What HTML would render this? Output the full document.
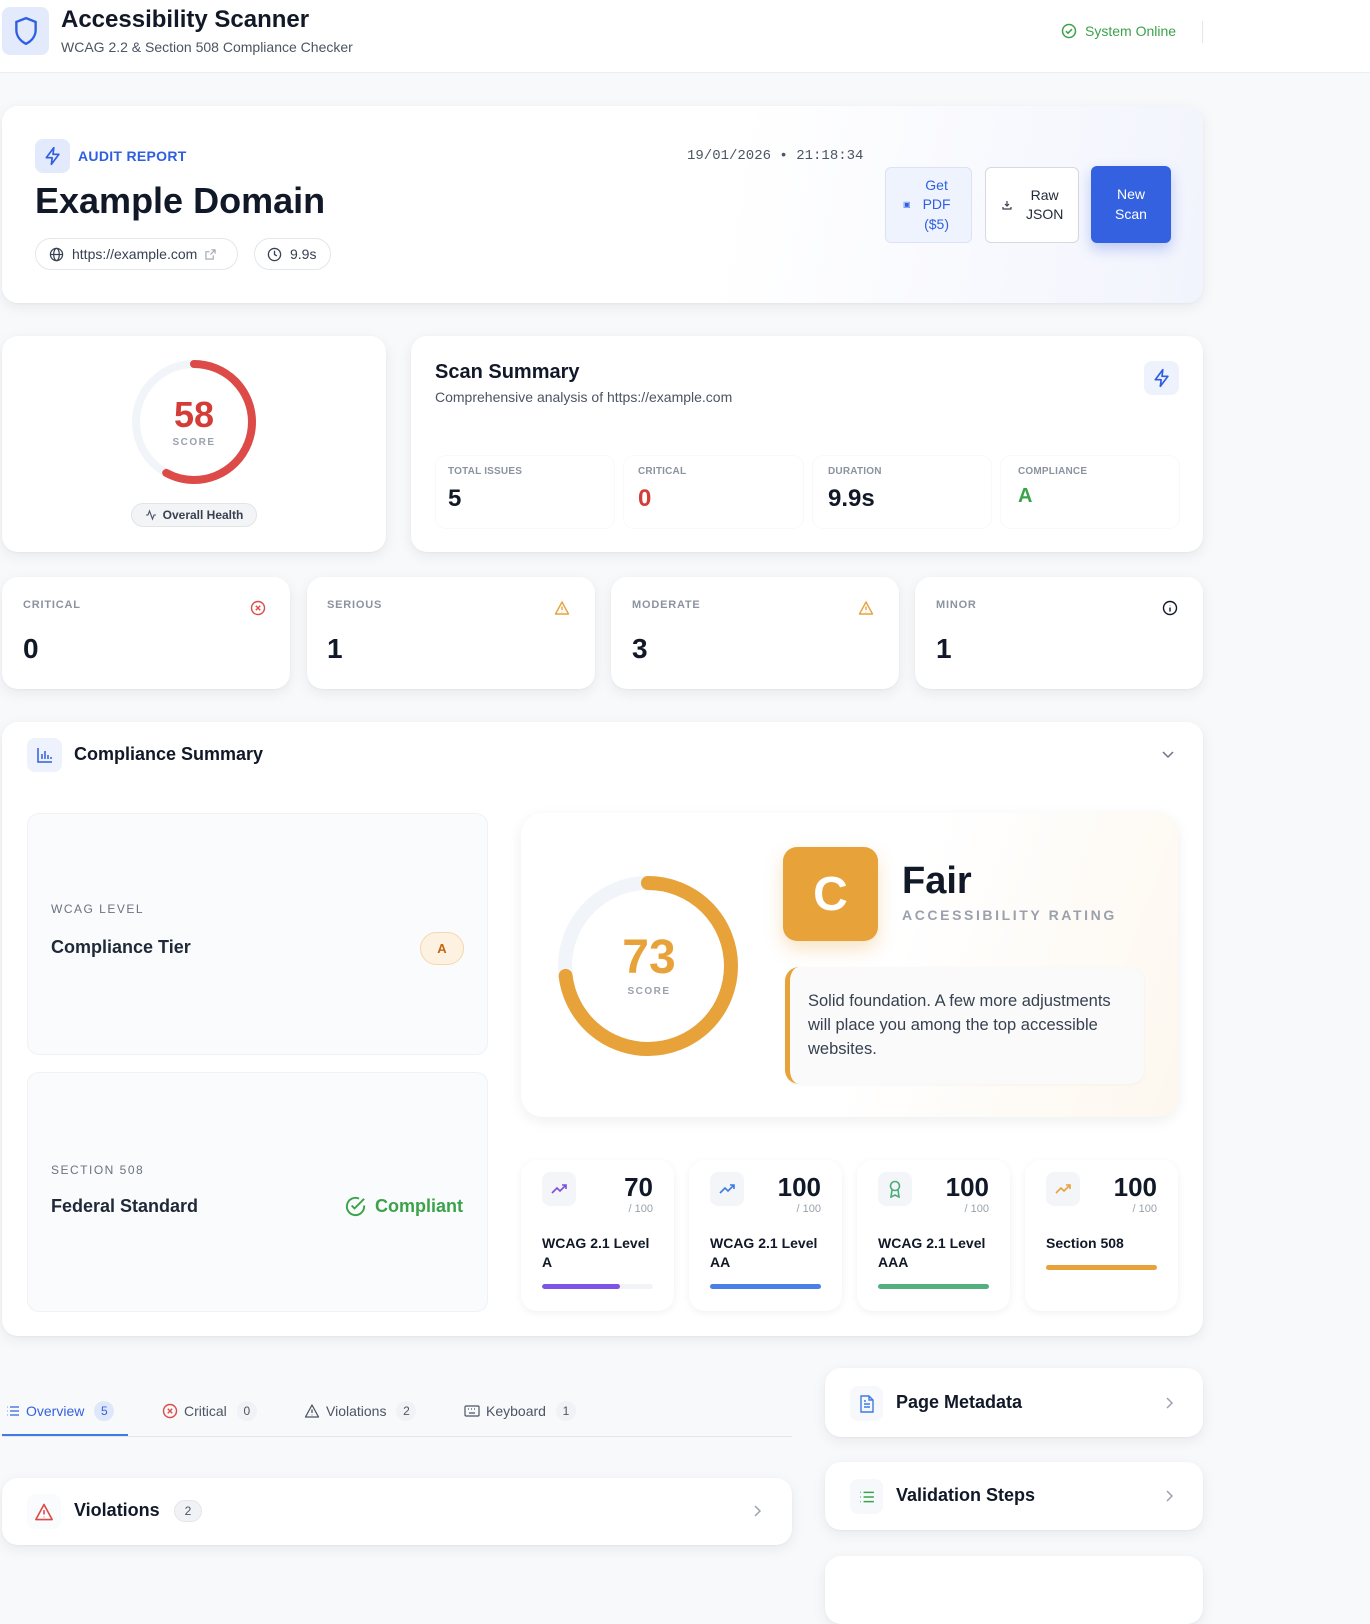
<!DOCTYPE html>
<html><head><meta charset="utf-8"><style>
*{box-sizing:border-box;margin:0;padding:0}
body{width:1370px;height:1586px;overflow:hidden;background:#f8f9fb;font-family:"Liberation Sans",sans-serif;color:#111827;position:relative}
.a{position:absolute}
.card{position:absolute;background:#fff;border-radius:16px;box-shadow:0 4px 14px rgba(15,23,42,.07),0 1px 2px rgba(15,23,42,.04)}
.lbl{font-size:11px;font-weight:700;color:#8b93a1;letter-spacing:.8px}
.big{font-size:28px;font-weight:700}
.ib{position:absolute;border-radius:8px;background:#f3f5f9;display:flex;align-items:center;justify-content:center}
.mini{position:absolute;top:1160px;width:153px;height:151px;background:#fff;border-radius:16px;box-shadow:0 2px 8px rgba(15,23,42,.06)}
.mini .n{position:absolute;right:21px;top:12px;font-size:26px;font-weight:700}
.mini .d{position:absolute;right:21px;top:43px;font-size:11px;color:#9aa1ad}
.mini .t{position:absolute;left:21px;top:74px;font-size:14px;font-weight:700;line-height:19px;width:115px}
.mini .bar{position:absolute;left:21px;width:111px;height:5px;border-radius:3px;background:#f1f3f6;overflow:hidden}
.tab{position:absolute;top:1401px;font-size:14px;color:#4b5563;display:flex;align-items:center;gap:6px}
.cnt{display:inline-block;min-width:20px;height:20px;border-radius:10px;background:#f0f2f5;font-size:12px;text-align:center;line-height:20px;margin-left:4px;color:#4b5563}
</style></head><body>
<!-- header -->
<div class="a" style="left:0;top:0;width:1370px;height:73px;background:#fff;border-bottom:1px solid #eceef2"></div>
<div class="a" style="left:2px;top:7px;width:47px;height:48px;background:#e2eafb;border-radius:8px;display:flex;align-items:center;justify-content:center">
<svg width="26" height="30" viewBox="0 0 24 28" fill="none" stroke="#2f5fe0" stroke-width="2.2"><path d="M12 2 L21 5.5 V13 C21 19 17 23.5 12 26 C7 23.5 3 19 3 13 V5.5 Z"/></svg></div>
<div class="a" style="left:61px;top:6px;font-size:24px;font-weight:700">Accessibility Scanner</div>
<div class="a" style="left:61px;top:39px;font-size:14px;color:#4b5563">WCAG 2.2 &amp; Section 508 Compliance Checker</div>
<div class="a" style="left:1061px;top:23px;font-size:14px;color:#3ca24a;display:flex;align-items:center;gap:8px"><svg width="16" height="16" viewBox="0 0 16 16" fill="none" stroke="#3ca24a" stroke-width="1.5"><circle cx="8" cy="8" r="6.5"/><path d="M5 8.2l2 2 4-4"/></svg>System Online</div>
<div class="a" style="left:1202px;top:21px;width:1px;height:22px;background:#e5e7eb"></div>

<!-- audit card -->
<div class="card" style="left:2px;top:106px;width:1201px;height:197px;background:linear-gradient(100deg,#fff 60%,#f2f4fd 100%)"></div>
<div class="a" style="left:35px;top:139px;width:35px;height:34px;border-radius:8px;background:#e2eafb;display:flex;align-items:center;justify-content:center"><svg width="20" height="20" viewBox="0 0 24 24" fill="none" stroke="#2f5fe0" stroke-width="2" stroke-linejoin="round"><path d="M13 2L4 14h7l-1 8 9-12h-7z"/></svg></div>
<div class="a" style="left:78px;top:148px;font-size:14px;font-weight:700;color:#2f5fe0;letter-spacing:.3px">AUDIT REPORT</div>
<div class="a" style="left:687px;top:148px;font-size:14px;color:#4b5563;font-family:'Liberation Mono',monospace">19/01/2026 • 21:18:34</div>
<div class="a" style="left:35px;top:180px;font-size:36px;font-weight:700">Example Domain</div>
<div class="a" style="left:35px;top:238px;width:203px;height:32px;border:1px solid #e3e6eb;border-radius:16px;background:#fff;font-size:14px;color:#374151;display:flex;align-items:center;padding-left:13px;gap:8px"><svg width="15" height="15" viewBox="0 0 16 16" fill="none" stroke="#374151" stroke-width="1.3"><circle cx="8" cy="8" r="6.5"/><ellipse cx="8" cy="8" rx="3" ry="6.5"/><path d="M1.5 8h13"/></svg>https://example.com<svg width="11" height="11" viewBox="0 0 12 12" fill="none" stroke="#9ca3af" stroke-width="1.2"><path d="M7 1h4v4M11 1L6 6M9 7v4H1V3h4"/></svg></div>
<div class="a" style="left:254px;top:238px;width:77px;height:32px;border:1px solid #e3e6eb;border-radius:16px;background:#fff;font-size:14px;color:#374151;display:flex;align-items:center;padding-left:12px;gap:8px"><svg width="15" height="15" viewBox="0 0 16 16" fill="none" stroke="#374151" stroke-width="1.4"><circle cx="8" cy="8" r="6.5"/><path d="M8 4v4l2.5 1.5"/></svg>9.9s</div>
<div class="a" style="left:885px;top:167px;width:87px;height:76px;border:1px solid #dbe3f3;border-radius:6px;background:#eef3fd;color:#2f5fe0;font-size:14px;line-height:19.5px;display:flex;align-items:center;padding-left:17px;gap:12px"><span style="font-size:8px">▣</span><span style="text-align:center">Get<br>PDF<br>($5)</span></div>
<div class="a" style="left:985px;top:167px;width:94px;height:76px;border:1px solid #d5d9e0;border-radius:6px;background:#fff;color:#1f2937;font-size:14px;line-height:19.5px;display:flex;align-items:center;padding-left:16px;gap:14px"><svg width="10" height="10" viewBox="0 0 10 10" fill="none" stroke="#374151" stroke-width="1.2"><path d="M5 1v5M3 4l2 2 2-2M1 7v2h8V7"/></svg><span style="text-align:center">Raw<br>JSON</span></div>
<div class="a" style="left:1091px;top:166px;width:80px;height:77px;border-radius:6px;background:#3461df;color:#fff;font-size:14px;line-height:19.5px;display:flex;align-items:center;justify-content:center;text-align:center;box-shadow:0 6px 14px rgba(52,97,223,.3)">New<br>Scan</div>

<!-- score card -->
<div class="card" style="left:2px;top:336px;width:384px;height:216px"></div>
<svg class="a" style="left:130px;top:358px" width="128" height="128" viewBox="0 0 128 128"><circle cx="64" cy="64" r="58" fill="none" stroke="#f1f4f9" stroke-width="8"/><circle cx="64" cy="64" r="58" fill="none" stroke="#dc4b47" stroke-width="8" stroke-linecap="round" stroke-dasharray="211 400" transform="rotate(-90 64 64)"/></svg>
<div class="a" style="left:144px;top:394px;width:100px;text-align:center;font-size:36px;font-weight:700;color:#d33c37">58</div>
<div class="a" style="left:144px;top:437px;width:100px;text-align:center;font-size:10px;font-weight:700;color:#9aa1ad;letter-spacing:1.5px">SCORE</div>
<div class="a" style="left:131px;top:503px;width:126px;height:24px;border:1px solid #e1e4e9;border-radius:12px;background:#f3f4f6;font-size:12px;font-weight:700;color:#374151;display:flex;align-items:center;justify-content:center;gap:6px"><svg width="12" height="12" viewBox="0 0 12 12" fill="none" stroke="#4b5563" stroke-width="1.1"><path d="M1 6h2l1.5-4 3 8L9 6h2"/></svg>Overall Health</div>

<!-- scan summary -->
<div class="card" style="left:411px;top:336px;width:792px;height:216px"></div>
<div class="a" style="left:435px;top:361px;font-size:20px;font-weight:700">Scan Summary</div>
<div class="a" style="left:435px;top:389px;font-size:14px;color:#4b5563">Comprehensive analysis of https://example.com</div>
<div class="a" style="left:1144px;top:361px;width:35px;height:34px;border-radius:8px;background:#eef2fc;display:flex;align-items:center;justify-content:center"><svg width="20" height="20" viewBox="0 0 24 24" fill="none" stroke="#2f5fe0" stroke-width="2" stroke-linejoin="round"><path d="M13 2L4 14h7l-1 8 9-12h-7z"/></svg></div>
<div class="a" style="left:436px;top:456px;width:743px;height:72px;display:flex;gap:10px">
<div style="flex:1;border-radius:10px;box-shadow:0 0 0 1px #f8f9fa"></div><div style="flex:1;border-radius:10px;box-shadow:0 0 0 1px #f8f9fa"></div><div style="flex:1;border-radius:10px;box-shadow:0 0 0 1px #f8f9fa"></div><div style="flex:1;border-radius:10px;box-shadow:0 0 0 1px #f8f9fa"></div></div>
<div class="a lbl" style="left:448px;top:466px;font-size:10px;letter-spacing:.2px">TOTAL ISSUES</div>
<div class="a lbl" style="left:638px;top:466px;font-size:10px;letter-spacing:.2px">CRITICAL</div>
<div class="a lbl" style="left:828px;top:466px;font-size:10px;letter-spacing:.2px">DURATION</div>
<div class="a lbl" style="left:1018px;top:466px;font-size:10px;letter-spacing:.2px">COMPLIANCE</div>
<div class="a" style="left:448px;top:485px;font-size:24px;font-weight:700">5</div>
<div class="a" style="left:638px;top:485px;font-size:24px;font-weight:700;color:#d33c37">0</div>
<div class="a" style="left:828px;top:485px;font-size:24px;font-weight:700">9.9s</div>
<div class="a" style="left:1018px;top:485px;font-size:20px;font-weight:700;color:#3ca24a">A</div>

<!-- severity -->
<div class="card" style="left:2px;top:577px;width:288px;height:112px"></div>
<div class="card" style="left:307px;top:577px;width:288px;height:112px"></div>
<div class="card" style="left:611px;top:577px;width:288px;height:112px"></div>
<div class="card" style="left:915px;top:577px;width:288px;height:112px"></div>
<div class="a lbl" style="left:23px;top:599px">CRITICAL</div>
<div class="a lbl" style="left:327px;top:599px">SERIOUS</div>
<div class="a lbl" style="left:632px;top:599px">MODERATE</div>
<div class="a lbl" style="left:936px;top:599px">MINOR</div>
<div class="a big" style="left:23px;top:633px">0</div>
<div class="a big" style="left:327px;top:633px">1</div>
<div class="a big" style="left:632px;top:633px">3</div>
<div class="a big" style="left:936px;top:633px">1</div>
<svg class="a" style="left:250px;top:600px" width="16" height="16" viewBox="0 0 16 16" fill="none" stroke="#dc4b47" stroke-width="1.4"><circle cx="8" cy="8" r="6.5"/><path d="M5.8 5.8l4.4 4.4M10.2 5.8l-4.4 4.4"/></svg>
<svg class="a" style="left:554px;top:600px" width="16" height="16" viewBox="0 0 16 16" fill="none" stroke="#e8a23a" stroke-width="1.4" stroke-linejoin="round"><path d="M8 2L1.5 14h13z"/><path d="M8 6.5v3.5M8 11.8v.4"/></svg>
<svg class="a" style="left:858px;top:600px" width="16" height="16" viewBox="0 0 16 16" fill="none" stroke="#e8a23a" stroke-width="1.4" stroke-linejoin="round"><path d="M8 2L1.5 14h13z"/><path d="M8 6.5v3.5M8 11.8v.4"/></svg>
<svg class="a" style="left:1162px;top:600px" width="16" height="16" viewBox="0 0 16 16" fill="none" stroke="#111827" stroke-width="1.4"><circle cx="8" cy="8" r="6.5"/><path d="M8 7.5v4M8 5v.3"/></svg>

<!-- compliance summary -->
<div class="card" style="left:2px;top:722px;width:1201px;height:614px"></div>
<div class="a" style="left:27px;top:738px;width:35px;height:34px;border-radius:8px;background:#eef2fc;display:flex;align-items:center;justify-content:center"><svg width="18" height="18" viewBox="0 0 18 18" fill="none" stroke="#2f5fe0" stroke-width="1.5"><path d="M2 2v14h14M6 13V8M9 13V5M12 13V9M15 13v-2"/></svg></div>
<div class="a" style="left:74px;top:744px;font-size:18px;font-weight:700">Compliance Summary</div>
<svg class="a" style="left:1161px;top:749px" width="14" height="12" viewBox="0 0 14 12" fill="none" stroke="#6b7280" stroke-width="1.5"><path d="M2 3l5 5 5-5"/></svg>

<div class="a" style="left:27px;top:813px;width:461px;height:242px;background:#fafbfd;border:1px solid #f0f1f4;border-radius:12px"></div>
<div class="a" style="left:27px;top:1072px;width:461px;height:240px;background:#fafbfd;border:1px solid #f0f1f4;border-radius:12px"></div>
<div class="a lbl" style="left:51px;top:902px;font-size:12px;letter-spacing:1.5px;font-weight:400;color:#6b7280">WCAG LEVEL</div>
<div class="a" style="left:51px;top:937px;font-size:18px;font-weight:700;color:#1f2937">Compliance Tier</div>
<div class="a" style="left:420px;top:932px;width:44px;height:33px;border-radius:17px;background:#fdf1e2;border:1px solid #f6d7aa;color:#c2660e;font-size:13px;font-weight:700;display:flex;align-items:center;justify-content:center">A</div>
<div class="a lbl" style="left:51px;top:1163px;font-size:12px;letter-spacing:1.5px;font-weight:400;color:#6b7280">SECTION 508</div>
<div class="a" style="left:51px;top:1196px;font-size:18px;font-weight:700;color:#1f2937">Federal Standard</div>
<div class="a" style="left:344px;top:1195px;font-size:18px;font-weight:700;color:#3ca24a;display:flex;align-items:center;gap:8px"><svg width="23" height="23" viewBox="0 0 24 24" fill="none" stroke="#3ca24a" stroke-width="2"><path d="M21 11v1a9 9 0 1 1-5.3-8.2"/><path d="M8 11l3 3 10-10"/></svg>Compliant</div>

<div class="a" style="left:521px;top:813px;width:657px;height:304px;border-radius:22px;background:linear-gradient(110deg,#fff 55%,#fdf7ee 100%);box-shadow:0 4px 14px rgba(15,23,42,.07)"></div>
<svg class="a" style="left:557px;top:875px" width="182" height="182" viewBox="0 0 182 182"><circle cx="91" cy="91" r="83" fill="none" stroke="#f1f4f9" stroke-width="14"/><circle cx="91" cy="91" r="83" fill="none" stroke="#e8a23a" stroke-width="14" stroke-linecap="round" stroke-dasharray="381 600" transform="rotate(-90 91 91)"/></svg>
<div class="a" style="left:589px;top:930px;width:120px;text-align:center;font-size:48px;font-weight:700;color:#e8a23a">73</div>
<div class="a" style="left:589px;top:986px;width:120px;text-align:center;font-size:10px;font-weight:700;color:#9aa1ad;letter-spacing:1.5px">SCORE</div>
<div class="a" style="left:783px;top:847px;width:95px;height:94px;border-radius:14px;background:#e8a23a;color:#fff;font-size:48px;font-weight:700;display:flex;align-items:center;justify-content:center;box-shadow:0 8px 18px rgba(232,162,58,.3)">C</div>
<div class="a" style="left:902px;top:860px;font-size:38px;font-weight:700">Fair</div>
<div class="a" style="left:902px;top:907px;font-size:14px;font-weight:700;color:#9aa1ad;letter-spacing:2.6px">ACCESSIBILITY RATING</div>
<div class="a" style="left:785px;top:967px;width:359px;height:117px;border-radius:14px;background:#fafafa;border-left:5px solid #e8a23a;box-shadow:0 1px 3px rgba(0,0,0,.04);padding:22px 30px 0 18px;font-size:16.5px;line-height:24px;color:#374151">Solid foundation. A few more adjustments will place you among the top accessible websites.</div>

<div class="mini" style="left:521px"><div class="ib" style="left:21px;top:12px;width:34px;height:34px"><svg width="18" height="18" viewBox="0 0 18 18" fill="none" stroke="#7c4ddf" stroke-width="1.6"><path d="M2 13l5-5 3 3 6-6M12 5h4v4"/></svg></div><div class="n">70</div><div class="d">/ 100</div><div class="t">WCAG 2.1 Level A</div><div class="bar" style="top:124px"><div style="width:70%;height:100%;background:#7c55e6;border-radius:3px"></div></div></div>
<div class="mini" style="left:689px"><div class="ib" style="left:21px;top:12px;width:34px;height:34px"><svg width="18" height="18" viewBox="0 0 18 18" fill="none" stroke="#3e7be6" stroke-width="1.6"><path d="M2 13l5-5 3 3 6-6M12 5h4v4"/></svg></div><div class="n">100</div><div class="d">/ 100</div><div class="t">WCAG 2.1 Level AA</div><div class="bar" style="top:124px;background:#4b7fe8"></div></div>
<div class="mini" style="left:857px"><div class="ib" style="left:21px;top:12px;width:34px;height:34px"><svg width="16" height="18" viewBox="0 0 16 18" fill="none" stroke="#49ad78" stroke-width="1.6"><circle cx="8" cy="6" r="4.5"/><path d="M5 10l-1 7 4-2 4 2-1-7"/></svg></div><div class="n">100</div><div class="d">/ 100</div><div class="t">WCAG 2.1 Level AAA</div><div class="bar" style="top:124px;background:#52b07f"></div></div>
<div class="mini" style="left:1025px"><div class="ib" style="left:21px;top:12px;width:34px;height:34px"><svg width="18" height="18" viewBox="0 0 18 18" fill="none" stroke="#e8a23a" stroke-width="1.6"><path d="M2 13l5-5 3 3 6-6M12 5h4v4"/></svg></div><div class="n">100</div><div class="d">/ 100</div><div class="t">Section 508</div><div class="bar" style="top:105px;background:#e8a23a"></div></div>

<!-- tabs -->
<div class="a" style="left:2px;top:1436px;width:790px;height:1px;background:#e5e7eb"></div>
<div class="a" style="left:2px;top:1434px;width:126px;height:2px;background:#3e7be6"></div>
<div class="tab" style="left:6px;color:#3461df"><svg width="14" height="12" viewBox="0 0 14 12" fill="none" stroke="#3461df" stroke-width="1.3"><path d="M4 2h9M4 6h9M4 10h9M1 2h.5M1 6h.5M1 10h.5"/></svg>Overview<span class="cnt" style="background:#dfe8fb;color:#3461df">5</span></div>
<div class="tab" style="left:162px"><svg width="16" height="16" viewBox="0 0 16 16" fill="none" stroke="#dc4b47" stroke-width="1.4"><circle cx="8" cy="8" r="6.5"/><path d="M5.8 5.8l4.4 4.4M10.2 5.8l-4.4 4.4"/></svg>Critical<span class="cnt">0</span></div>
<div class="tab" style="left:304px"><svg width="16" height="16" viewBox="0 0 16 16" fill="none" stroke="#4b5563" stroke-width="1.3" stroke-linejoin="round"><path d="M8 2L1.5 14h13z"/><path d="M8 6.5v3.5M8 11.8v.4"/></svg>Violations<span class="cnt">2</span></div>
<div class="tab" style="left:464px"><svg width="16" height="14" viewBox="0 0 16 14" fill="none" stroke="#4b5563" stroke-width="1.2"><rect x="1" y="2" width="14" height="10" rx="1"/><path d="M4 5h1M7 5h1M10 5h1M5 9h6"/></svg>Keyboard<span class="cnt">1</span></div>

<div class="card" style="left:2px;top:1478px;width:790px;height:67px"></div>
<div class="a" style="left:27px;top:1494px;width:34px;height:35px;border-radius:8px;background:#fafbfc;display:flex;align-items:center;justify-content:center"><svg width="20" height="20" viewBox="0 0 16 16" fill="none" stroke="#dc4b47" stroke-width="1.3" stroke-linejoin="round"><path d="M8 2L1.5 14h13z"/><path d="M8 6.5v3.5M8 11.8v.4"/></svg></div>
<div class="a" style="left:74px;top:1500px;font-size:18px;font-weight:700">Violations</div>
<div class="a" style="left:174px;top:1500px;width:28px;height:22px;border-radius:11px;background:#f0f2f5;border:1px solid #e3e5e9;font-size:12px;color:#4b5563;text-align:center;line-height:20px">2</div>
<svg class="a" style="left:752px;top:1504px" width="10" height="14" viewBox="0 0 10 14" fill="none" stroke="#9ca3af" stroke-width="1.5"><path d="M3 2l5 5-5 5"/></svg>

<div class="card" style="left:825px;top:1368px;width:378px;height:69px"></div>
<div class="a" style="left:850px;top:1386px;width:33px;height:35px;border-radius:8px;background:#f6f8fb;display:flex;align-items:center;justify-content:center"><svg width="16" height="18" viewBox="0 0 16 18" fill="none" stroke="#3e7be6" stroke-width="1.4"><path d="M2 1h8l4 4v12H2z M10 1v4h4M5 9h6M5 12h6M5 6h2"/></svg></div>
<div class="a" style="left:896px;top:1392px;font-size:18px;font-weight:700">Page Metadata</div>
<svg class="a" style="left:1164px;top:1396px" width="10" height="14" viewBox="0 0 10 14" fill="none" stroke="#9ca3af" stroke-width="1.5"><path d="M3 2l5 5-5 5"/></svg>
<div class="card" style="left:825px;top:1462px;width:378px;height:68px"></div>
<div class="a" style="left:850px;top:1479px;width:33px;height:35px;border-radius:8px;background:#f6f8fb;display:flex;align-items:center;justify-content:center"><svg width="16" height="14" viewBox="0 0 14 12" fill="none" stroke="#3ca24a" stroke-width="1.3"><path d="M4 2h9M4 6h9M4 10h9M1 2h.5M1 6h.5M1 10h.5"/></svg></div>
<div class="a" style="left:896px;top:1485px;font-size:18px;font-weight:700">Validation Steps</div>
<svg class="a" style="left:1164px;top:1489px" width="10" height="14" viewBox="0 0 10 14" fill="none" stroke="#9ca3af" stroke-width="1.5"><path d="M3 2l5 5-5 5"/></svg>
<div class="card" style="left:825px;top:1556px;width:378px;height:68px"></div>
</body></html>
